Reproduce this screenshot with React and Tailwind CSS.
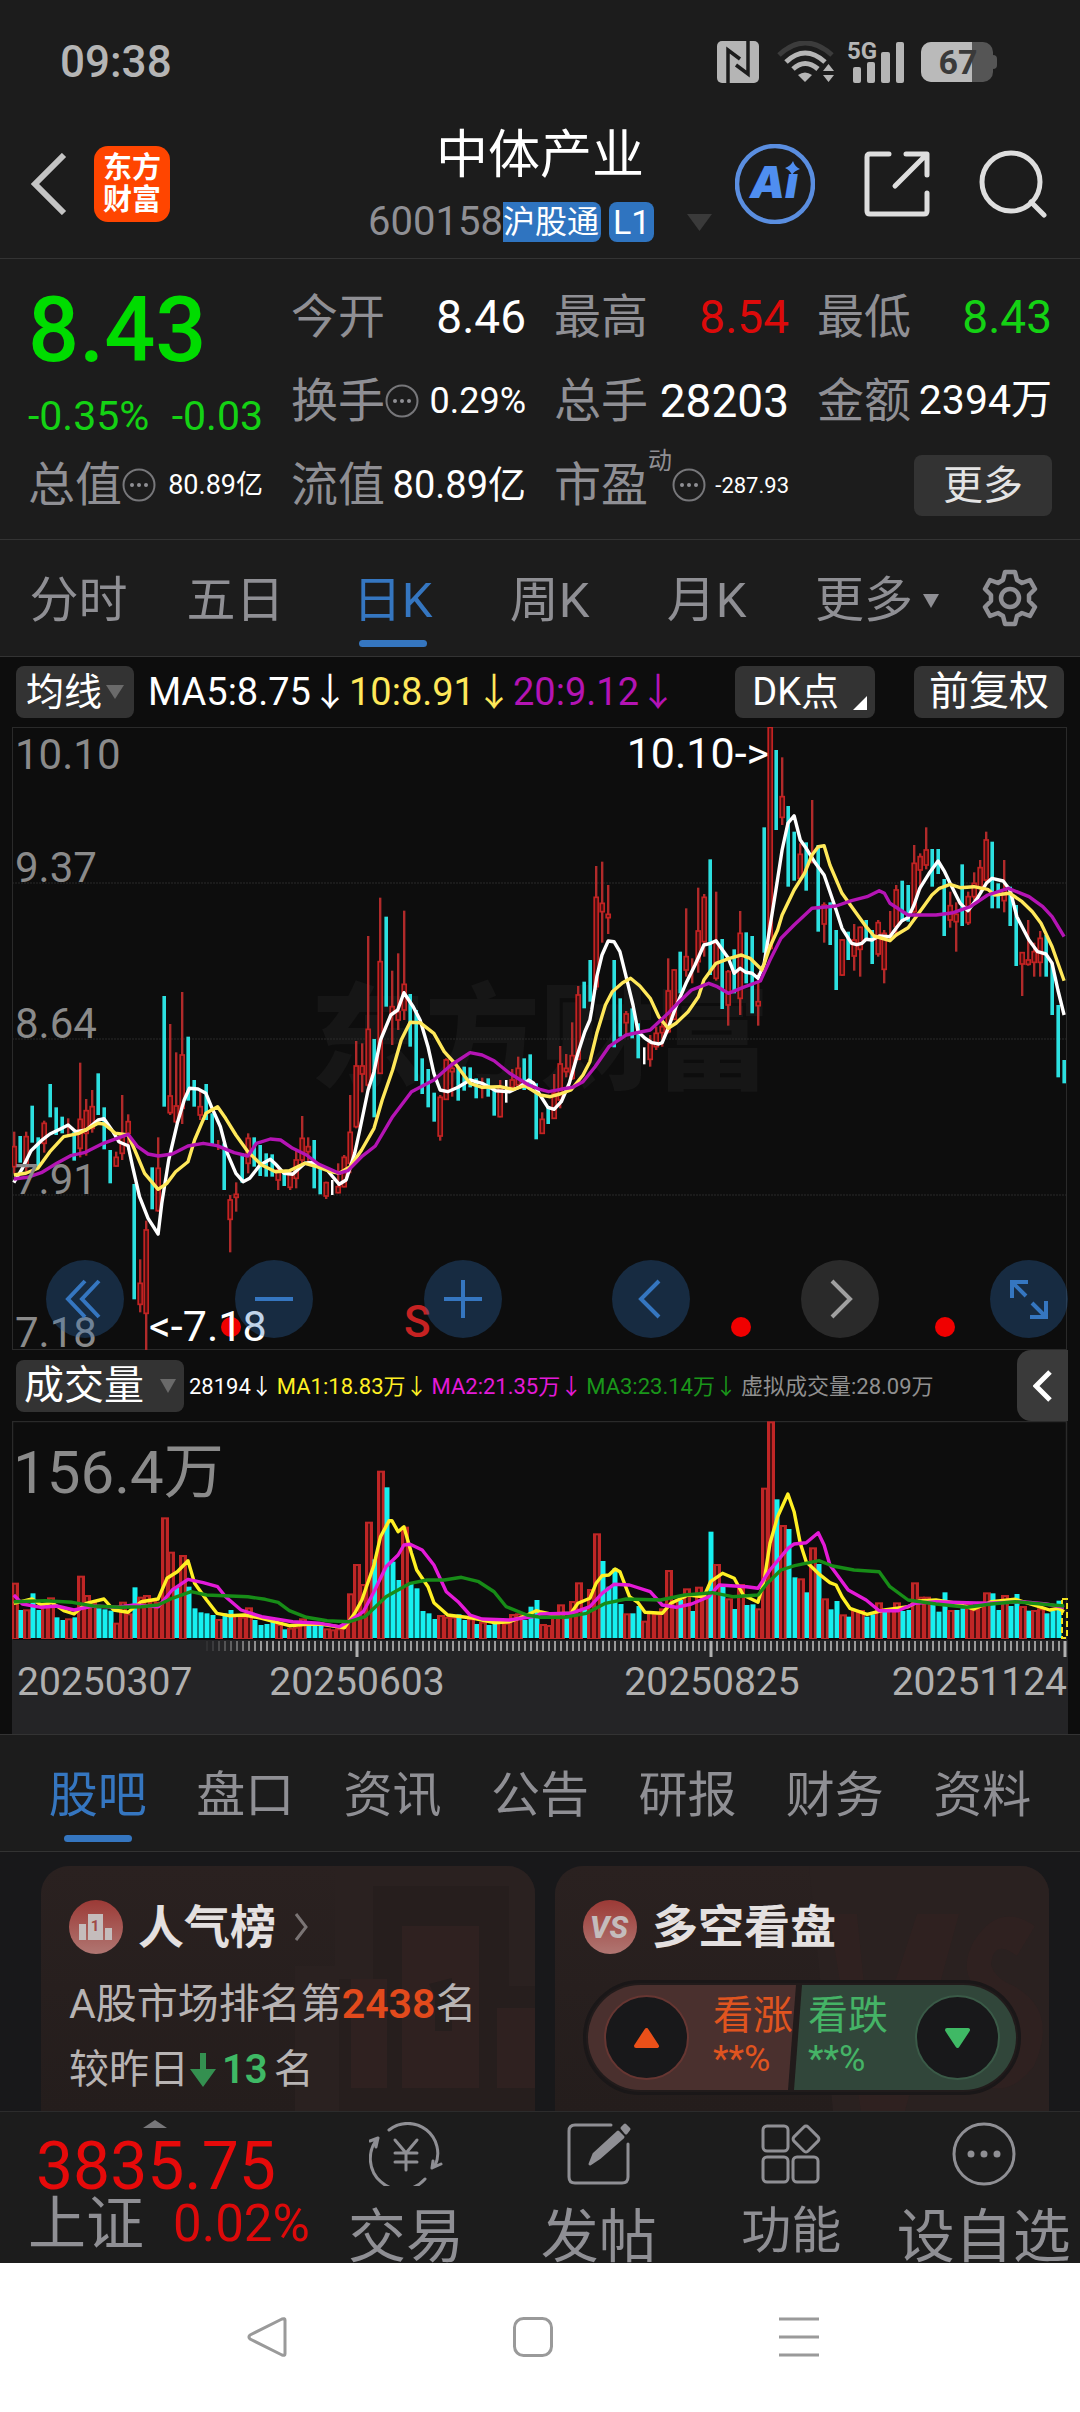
// src/App.jsx
import { useState } from 'react';

// --- K 线数据 ---
// r = 阳线, c = 阴线, w = 平盘；数值依次为 高, 低, [实体上, 实体下]（三分之一像素刻度）
const EARLY_CANDLES = `
r395,520,440,500 c408,488 r395,515,410,500 c317,428 c412,500 r362,458,370,430 c252,352 c322,405 c350,400 r355,410
c395,482 r188,472,358,445 r297,467,332,400 r270,398,320,385 c220,345 c322,448 c450,550 r455,500,472,498 r285,480,405,460 r343,450,365,400
c552,898 r778,937,850,913 r662,1052,690,940 c502,628 r412,635,505,632 c-12,320 r72,345,288,338 r157,370,318,365 r-24,372,165,325 c110,302
c240,320 r270,360,320,345 c252,360 c340,432 r420,450 c430,570 r585,757,600,658 r547,635,583,592 c460,548 r400,520,415,490
c412,500 c435,528 c460,530 c463,530 r500,570,510,540 c510,558 r510,570,520,562 r450,565,480,535 r348,500,415,480 r412,495,440,455
c420,565 c500,583 r545,597,548,588 w540,585 r490,580,560,578 r465,562,472,560 r285,520,397,490 r123,385,198,380 r130,277,198,222 r-192,260,88,255
c117,352 r-307,222,-115,220 c-250,20 r-88,135,20,40 r-140,90,35,60 r-268,60,-47,30 c-18,140 c30,243 c175,282 c207,322
c278,365 r285,422,292,408 r175,300,180,298 r180,290,205,215 c200,302 c200,272 c202,262 c235,295 r233,295 c235,290
c270,347 r240,352,262,350 w240,308 r207,270,240,262 r170,262,205,255 c175,270 c163,270 c250,418 r337,402,358,400 c318,372
r222,357,280,355 r138,325,192,300 r162,232,205,215 r67,240,167,235 r-42,180,-15,178 c-55,25 c-120,5 r-402,-30,-308,-40 r-415,-172,-290,-265 r-345,-198,-257,-247
c-120,142 c-5,110 r33,105,42,68 c25,115 c70,175 w142,193 r105,200,130,178 r80,150,100,140 r60,140,80,98 r-125,100,-27,95`;

const LATE_CANDLES = `
r958,1110,960,1108 c905,1030 r775,980,920,960 r925,1000 r713,968,843,935 r732,920,742,875 c628,975 r725,992,880,985 c867,1077 r960,1127,965,1065
c898,1030 r783,1095,850,1045 c847,1000 c858,1090 r970,1127,1055,1067 c532,908 r231,900,232,895 c300,540 r322,525,440,502 c468,710
c545,692 r580,690,613,685 c577,722 r450,640 c585,845 r757,878,765,822 c757,885 c840,1020 r868,978,870,975 c845,930
r822,962,870,918 r830,980,832,898 c810,870 c840,942 r810,920,818,912 r840,1000,850,958 r783,870 r705,860,720,830 c692,815 c705,815
r585,790,640,785 r610,720,620,660 r532,658,600,645 c597,710 c597,672 c687,858 r725,833,767,810 r757,905,793,815 c643,828 r725,825,740,818
r667,750,700,740 r630,725,653,715 r545,700,570,690 c575,775 c700,775 r630,787,720,752 c710,828 c765,948 r908,1038,908,942 r810,947,930,943
r878,980,905,937 r843,980,865,937 c855,980 c940,1095 c1065,1282 c1230,1300`;

function parseCandles(text, offset) {
  return text.trim().split(/\s+/).map((item) => ({
    kind: item[0],
    levels: item.slice(1).split(',').map((n) => Number(n) / 3 + offset),
  }));
}

const CANDLES = [...parseCandles(EARLY_CANDLES, 273), ...parseCandles(LATE_CANDLES, -77)];

// --- 成交量柱 ---
const VOLUMES = `
r548 c630 r628 c580 c630 r618 r592 c652 c660 r655 c652 r527 r585 r605 c625 c628 c632 r668 r605 r640
c562 r590 r585 r600 r605 r352 r455 c562 r465 c560 c625 c637 c640 c645 r657 c640 c630 r645 r650 r622
c660 c675 c672 c665 r672 c688 r683 r680 r655 c668 c672 c675 r685 r688 r685 r680 r580 r492 r552 r365
c478 r212 c262 c485 c540 r380 c550 c565 c633 c640 c657 r645 r650 r650 c643 c660 r655 c672 r665 c675
c670 r665 r668 r642 r640 c660 c620 c600 r672 r675 r645 r613 c655 r603 r547 c625 r567 r400 c483 c560
c505 c612 r640 c640 c618 r662 r635 r640 r625 r510 r600 c600 r565 c633 r560 r585 c395 r492 c560 r595
c627 r552 c615 c613 r625 r263 r64 c298 r375 c387 c532 r535 c577 r442 c492 r595 c628 c603 r643 c650
r630 r630 c650 c643 r607 c635 r630 r607 c633 c630 r547 r590 r590 c605 c635 c577 r630 c630 c625 r610
r628 r605 r577 c580 c630 r585 c618 c582 r618 c632 r630 r625 c640 c632 c602`.trim().split(/\s+/);

// --- 均线 ---
const PRICE_LINES = [
  {
    color: '#ffffff',
    early: '40,548 65,505 90,452 120,422 145,402 175,387 198,375 220,395 250,390 285,360 302,356 325,390 345,425 372,437 385,500 405,590 430,655 459,702 470,610 490,480 515,370 535,300 550,265 575,267 598,280 616,325 640,380 660,460 685,520 706,545 725,535 755,495 785,478 800,492 825,520 850,523 885,490 910,487 950,510 985,553 1005,540 1030,460 1045,390 1069,270 1086,215 1105,120 1135,45 1155,30 1173,-22 1200,20 1220,60 1243,140 1260,220 1278,270 1300,275 1330,262 1365,240 1400,250 1440,272 1480,275 1510,260 1535,240 1550,250',
    late: '0,1335 23,1372 41,1378 62,1355 85,1300 110,1210 130,1145 145,1110 150,1080 165,980 180,915 198,873 215,875 232,905 250,980 270,1065 285,1145 305,1165 325,1178 345,1182 355,1178 372,1135 395,1070 424,1000 450,945 476,885 495,880 511,872 530,900 547,925 564,970 581,955 598,967 616,970 633,985 651,940 668,830 685,720 703,600 720,520 738,497 756,570 773,595 800,640 825,675 842,725 860,780 877,835 905,880 920,884 935,880 947,868 964,870 985,858 1016,860 1034,835 1051,812 1069,803 1086,765 1103,715 1130,670 1156,633 1175,665 1191,700 1220,760 1243,782 1270,745 1296,700 1313,685 1345,693 1365,720 1385,800 1420,870 1445,905 1469,912 1487,940 1504,1020 1522,1095',
  },
  {
    color: '#ffe85a',
    early: '40,525 75,520 110,505 145,455 185,410 230,400 285,370 302,372 335,400 372,405 389,445 420,520 459,568 485,550 510,515 546,485 565,420 598,340 632,320 655,355 685,405 720,455 760,495 800,515 840,512 885,490 920,500 960,515 985,520 1017,500 1050,450 1086,385 1110,300 1140,210 1165,120 1191,67 1220,68 1260,100 1290,155 1325,195 1365,250 1400,262 1452,260 1490,268 1525,257',
    late: '0,1335 30,1340 58,1332 90,1320 125,1275 145,1235 165,1150 190,1065 210,1025 240,998 263,985 290,1008 320,1045 345,1100 372,1135 395,1120 430,1085 460,1040 476,990 511,940 550,925 585,915 610,925 645,960 668,890 690,840 703,795 738,720 768,670 790,615 808,590 825,587 842,645 877,730 912,780 947,830 970,858 1016,872 1034,855 1069,833 1103,785 1138,735 1160,715 1191,703 1220,713 1260,710 1300,718 1320,735 1365,730 1400,755 1430,785 1455,820 1487,890 1522,992',
  },
  {
    color: '#b414b4',
    early: '40,537 80,532 120,518 165,490 205,467 245,458 300,430 372,403 400,440 430,462 460,468 500,462 546,438 590,430 630,437 680,458 720,468 745,430 785,417 815,420 850,445 890,465 925,492 985,520 1010,512 1050,470 1090,438 1140,350 1195,275 1260,240 1310,195 1365,158 1400,165 1435,182 1480,220 1535,255',
    late: '0,1318 25,1325 60,1318 95,1312 125,1295 160,1250 200,1190 250,1155 320,1140 372,1090 395,1065 440,1020 490,1000 515,1010 547,1030 590,1012 640,993 668,930 700,865 738,825 790,775 860,768 905,752 950,740 985,722 1000,730 1016,760 1069,795 1150,795 1200,788 1250,770 1300,735 1360,715 1420,740 1460,770 1487,800 1522,860',
  },
];

const VOLUME_LINES = [
  {
    color: '#fff024',
    early: '40,610 93,597 120,615 150,608 185,632 215,642 250,610 302,597 330,630 372,637 410,605 459,597 485,535 515,515 546,482 565,550 600,600 630,640 665,647 710,645 760,655 840,677 890,673 930,672 1000,683 1030,640 1051,600 1086,495 1105,410 1130,362 1138,362 1156,395 1173,380 1195,460 1210,510 1243,560 1260,608 1300,645 1365,653 1435,668 1480,665 1520,650 1557,632',
    late: '0,635 30,642 90,640 110,610 145,595 163,550 180,527 200,525 218,507 232,515 260,590 285,608 305,637 355,640 380,610 430,585 476,590 495,545 530,520 564,535 590,585 633,607 651,540 668,430 690,350 720,282 738,335 756,430 773,485 808,520 842,548 860,555 877,590 900,625 950,643 1000,630 1069,620 1100,603 1150,600 1200,608 1260,627 1310,605 1380,598 1440,617 1480,630 1505,625 1522,635',
  },
  {
    color: '#e41ad8',
    early: '40,585 65,612 120,622 165,618 215,630 270,618 340,622 389,615 460,620 500,570 546,538 590,548 632,560 655,590 700,630 760,650 850,665 930,670 985,680 1020,660 1055,635 1086,575 1121,500 1156,465 1173,435 1191,433 1226,450 1260,495 1296,575 1330,605 1365,645 1400,657 1480,660 1560,648',
    late: '0,642 90,640 145,620 180,580 215,553 260,555 320,575 355,615 395,622 440,612 490,590 520,555 600,560 633,565 668,510 720,445 738,432 773,428 808,398 825,435 842,495 895,570 947,600 985,632 1040,632 1090,610 1150,605 1240,608 1300,610 1400,605 1470,612 1522,622',
  },
  {
    color: '#178c17',
    early: '40,605 130,602 210,607 270,618 350,622 410,620 459,615 500,595 555,575 600,585 720,590 770,598 808,607 840,632 890,652 950,662 1015,665 1060,650 1121,590 1191,550 1240,540 1290,540 1340,532 1390,545 1435,575 1470,620 1530,645 1560,650',
    late: '0,652 70,652 135,640 190,610 250,597 350,600 420,585 500,578 560,590 633,585 660,550 700,510 740,497 810,482 850,498 912,510 985,515 1016,560 1069,600 1150,612 1240,622 1310,612 1380,605 1522,618',
  },
];

function linePoints(text, dx, dy) {
  return text.split(' ').map((pair) => {
    const [x, y] = pair.split(',').map(Number);
    return `${(x / 2.904 + dx).toFixed(1)},${(y / 3 + dy).toFixed(1)}`;
  });
}

function MaLine({ line, earlyDy, lateDy }) {
  const points = [...linePoints(line.early, -12, earlyDy), ...linePoints(line.late, 528, lateDy)];
  return <polyline points={points.join(' ')} fill="none" stroke={line.color} strokeWidth="3.4" strokeLinejoin="round" />;
}

function Candle({ index, candle }) {
  const x = 2 + index * 6;
  const [high, low, top, bottom] = candle.levels;
  if (candle.kind === 'c') {
    return <rect x={x - 1.6} y={high} width="3.6" height={low - high} fill="#2ce0e0" />;
  }
  if (candle.kind === 'w') {
    return <rect x={x - 1} y={high} width="2.5" height={low - high} fill="#fff" />;
  }
  return (
    <g>
      <rect x={x - 1} y={high} width="2.4" height={low - high} fill="#b02a2a" />
      {top !== undefined && (
        <rect x={x - 1.8} y={top} width="4" height={bottom - top} fill="#4a1010" stroke="#c42222" strokeWidth="1.7" />
      )}
    </g>
  );
}

function PriceChart() {
  return (
    <svg viewBox="0 0 1056 623" className="block w-full" role="img" aria-label="日K线图">
      <text x="528" y="353" textAnchor="middle" fontSize="115" fontWeight="900" fill="#161616">东方财富</text>
      <g stroke="#2a2a2a" strokeWidth="1">
        <path d="M0 156H1055M0 312H1055M0 468H1055" strokeDasharray="2 1" />
        <rect x="0.5" y="0.5" width="1054" height="622" fill="none" />
      </g>
      {CANDLES.map((candle, i) => <Candle key={i} index={i} candle={candle} />)}
      {PRICE_LINES.map((line) => <MaLine key={line.color} line={line} earlyDy={273} lateDy={-77} />)}
      <g fill="#8a8a8a" fontSize="42">
        <text x="3" y="42">10.10</text>
        <text x="3" y="155">9.37</text>
        <text x="3" y="311">8.64</text>
        <text x="3" y="467">7.91</text>
        <text x="3" y="620">7.18</text>
      </g>
      <circle cx="219" cy="600" r="10" fill="#f00000" />
      <circle cx="729" cy="600" r="10" fill="#f00000" />
      <circle cx="933" cy="600" r="10" fill="#f00000" />
      <g fill="#fff" fontSize="43">
        <text x="757" y="41" textAnchor="end">10.10-&gt;</text>
        <text x="137" y="614">&lt;-7.18</text>
      </g>
      <text x="392" y="610" fontSize="44" fontWeight="500" fill="#c62222">S</text>
    </svg>
  );
}

function VolumeChart() {
  const ticks = Array.from({ length: 144 }, (_, i) => i);
  return (
    <svg viewBox="0 0 1056 313" className="block w-full" role="img" aria-label="成交量图">
      <rect x="0" y="219" width="1056" height="94" fill="#242426" />
      <path d="M0.5 219V0.5H1054.5V219" fill="none" stroke="#2a2a2a" strokeWidth="1.5" />
      <text x="1" y="72" fontSize="60" fill="#8a8a8a">156.4万</text>
      {VOLUMES.map((item, i) => {
        const top = Number(item.slice(1)) / 3 - 21;
        const x = 3 + i * 6;
        return item[0] === 'r' ? (
          <g key={i}>
            <rect x={x - 4} y={top} width="8" height={218 - top} fill="#c02626" />
            <rect x={x - 1} y={top + 2} width="2" height={215 - top} fill="#4a1010" />
          </g>
        ) : (
          <rect key={i} x={x - 2.5} y={top} width="5" height={217 - top} fill="#16f0f0" />
        );
      })}
      <rect x="1050" y="178" width="5" height="39" fill="none" stroke="#f0e020" strokeWidth="2" strokeDasharray="6 3" />
      {VOLUME_LINES.map((line) => <MaLine key={line.color} line={line} earlyDy={-21} lateDy={-21} />)}
      {ticks.map((i) => (
        <rect key={i} x={188 + i * 6} y="220" width="2" height="10" fill="#9a9a9a" opacity={Math.min(1, i / 10)} />
      ))}
      <path d="M345 220V236M699 220V236M1053 220V236" stroke="#b0b0b0" strokeWidth="3" />
      <g fontSize="39" fill="#b0b0b0">
        <text x="5" y="274">20250307</text>
        <text x="345" y="274" textAnchor="middle">20250603</text>
        <text x="700" y="274" textAnchor="middle">20250825</text>
        <text x="1055" y="274" textAnchor="end">20251124</text>
      </g>
    </svg>
  );
}

// --- 状态栏 ---
function StatusBar() {
  return (
    <div className="flex items-center justify-between pt-[37px] pr-[83px] pl-[60px] text-[#b5b5b5]">
      <span className="text-[44px] leading-[50px] font-medium">09:38</span>
      <div className="flex items-center">
        <svg width="42" height="42" viewBox="0 0 42 42">
          <rect width="42" height="42" rx="5" fill="#b5b5b5" />
          <path d="M11 42V9L23 18M31 0V33L19 24" fill="none" stroke="#1c1c1c" strokeWidth="3.5" />
        </svg>
        <svg width="58" height="42" viewBox="0 0 58 42" className="ml-[18px]" fill="none" strokeWidth="5">
          <path d="M2 14Q28 -10 55 14" stroke="#3c3c3c" />
          <path d="M9 21Q28 3 48 21M16 28Q28 17 41 28" stroke="#b5b5b5" />
          <path d="M21 34Q28 29 35 34L28 41Z" fill="#b5b5b5" />
          <path d="M46 30L51.500 23L57 30ZM46 34H57L51.500 41Z" fill="#b5b5b5" />
        </svg>
        <svg width="62" height="44" viewBox="0 0 62 44" className="ml-3 overflow-visible" fill="#b5b5b5">
          <text x="0" y="19" fontSize="24" fontWeight="700">5G</text>
          <rect x="6" y="27" width="8" height="16" rx="2" />
          <rect x="20" y="22" width="8" height="21" rx="2" />
          <rect x="34" y="12" width="9" height="31" rx="2" />
          <rect x="49" y="2" width="8" height="41" rx="2" />
        </svg>
        <svg width="76" height="40" viewBox="0 0 76 40" className="ml-3">
          <rect x="60" y="13" width="16" height="14" rx="4" fill="#555" />
          <rect x="0" y="0" width="72" height="40" rx="10" fill="#555" />
          <path d="M10 0H51V40H10A10 10 0 0 1 0 30V10A10 10 0 0 1 10 0Z" fill="#bababa" />
          <text x="37" y="32" textAnchor="middle" fontSize="34" fontWeight="700" fill="#3a3a3a">67</text>
        </svg>
      </div>
    </div>
  );
}

// --- 顶部标题 ---
function Header() {
  return (
    <header className="grid grid-cols-[1fr_auto_1fr] items-center border-b border-[#333] pt-[39px] pb-4">
      <div className="flex items-center gap-[26px] pl-[30px]">
        <button type="button" aria-label="返回">
          <svg width="38" height="62" viewBox="0 0 38 62" fill="none" stroke="#c4c4c4" strokeWidth="6">
            <path d="M34 2L5 31L34 60" />
          </svg>
        </button>
        <a href="#home" className="rounded-[14px] bg-[#ff4500] px-[9px] py-1.5 text-[29px] leading-8 font-bold text-white">
          东方<br />财富
        </a>
      </div>

      <div className="flex w-[344px] flex-col gap-4">
        <h1 className="text-center text-[52px] leading-[60px] text-white">中体产业</h1>
        <div className="flex items-center text-[40px] leading-10 text-[#8f8f94]">
          <span>600158</span>
          <span className="rounded-r-[8px] bg-[#2f74c0] pr-0.5 text-[32px] text-white">沪股通</span>
          <span className="ml-2 rounded-[8px] bg-[#2f74c0] px-1 text-[34px] text-white">L1</span>
          <svg width="25" height="17" viewBox="0 0 25 17" className="ml-auto"><path d="M0 0H25L12.500 17Z" fill="#3a3a3a" /></svg>
        </div>
      </div>

      <div className="flex items-center justify-end gap-[49px] pr-[33px]">
        <button type="button" aria-label="AI 助手">
          <svg width="80" height="80" viewBox="0 0 80 80">
            <circle cx="40" cy="40" r="38" fill="none" stroke="#5a8ee0" strokeWidth="4.500" />
            <text x="15" y="54" fontSize="44" fontWeight="900" fontStyle="italic" fontFamily="Inter, sans-serif" fill="#4f8ef0">Aı</text>
            <path d="M58 17Q60 23 65 25Q59 27 57 31Q55 26 50 24Q56 22 58 17Z" fill="#4f8ef0" />
          </svg>
        </button>
        <button type="button" aria-label="分享">
          <svg width="66" height="66" viewBox="0 0 66 66" fill="none" stroke="#dedede" strokeWidth="5" strokeLinecap="round" strokeLinejoin="round">
            <path d="M25 3H6Q3 3 3 6V60Q3 63 6 63H60Q63 63 63 60V42M42 3H63V24M62 4L31 35" />
          </svg>
        </button>
        <button type="button" aria-label="搜索">
          <svg width="68" height="68" viewBox="0 0 68 68" fill="none" stroke="#dedede" strokeWidth="5" strokeLinecap="round">
            <circle cx="32" cy="32" r="29" />
            <path d="M52 52L65 65" />
          </svg>
        </button>
      </div>
    </header>
  );
}

function InfoIcon() {
  return (
    <svg width="34" height="34" viewBox="0 0 34 34" className="shrink-0">
      <circle cx="17" cy="17" r="15.500" fill="none" stroke="#77777a" strokeWidth="2" />
      <g fill="#8f8f94"><circle cx="10" cy="17" r="2" /><circle cx="17" cy="17" r="2" /><circle cx="24" cy="17" r="2" /></g>
    </svg>
  );
}

function Quote({ label, value, valueClass, info, sup }) {
  return (
    <div className="flex h-[84px] items-center">
      <span className="shrink-0 text-[47px] text-[#8f8f94]">{label}</span>
      {sup && <span className="self-start text-[24px] leading-9 text-[#8f8f94]">{sup}</span>}
      {info && <InfoIcon />}
      <span className={`ml-auto whitespace-nowrap ${valueClass}`}>{value}</span>
    </div>
  );
}

function QuotePanel() {
  return (
    <section className="grid grid-cols-4 gap-x-7 border-b border-[#333] px-7 pt-4 pb-3">
      <div className="row-span-2 flex flex-col gap-3.5 pt-2.5 text-[#00dc00]">
        <strong className="text-[90px] leading-[92px] font-medium">8.43</strong>
        <div className="flex justify-between text-[41px] leading-[50px] text-[#14d214]">
          <span>-0.35%</span>
          <span>-0.03</span>
        </div>
      </div>
      <Quote label="今开" value="8.46" valueClass="text-[46px] text-white" />
      <Quote label="最高" value="8.54" valueClass="text-[46px] text-[#dc0a0a]" />
      <Quote label="最低" value="8.43" valueClass="text-[46px] text-[#14d214]" />
      <Quote label="换手" info value="0.29%" valueClass="text-[36px] text-white" />
      <Quote label="总手" value="28203" valueClass="text-[46px] text-white" />
      <Quote label="金额" value="2394万" valueClass="text-[41px] text-white" />
      <Quote label="总值" info value="80.89亿" valueClass="text-[27px] text-white" />
      <Quote label="流值" value="80.89亿" valueClass="text-[38px] text-white" />
      <Quote label="市盈" sup="动" info value="-287.93" valueClass="text-[22px] text-white" />
      <div className="flex h-[84px] items-center justify-end">
        <button type="button" className="rounded-[8px] bg-[#333] px-[29px] text-[40px] leading-[61px] text-[#e4e4e4]">更多</button>
      </div>
    </section>
  );
}

// --- 标签页按钮 ---
function TabButton({ active, onClick, children }) {
  return (
    <button type="button" role="tab" aria-selected={active} onClick={onClick} className="flex flex-col items-center gap-[15px]">
      <span className={`flex items-center text-[49px] leading-[48px] whitespace-nowrap ${active ? 'text-[#3576c0]' : 'text-[#8f8f94]'}`}>{children}</span>
      <span className={`h-[7px] w-[68px] rounded-full ${active ? 'bg-[#3576c0]' : 'bg-transparent'}`} />
    </button>
  );
}

const PERIODS = ['分时', '五日', '日K', '周K', '月K'];

function PeriodTabs() {
  const [period, setPeriod] = useState('日K');
  return (
    <nav className="grid grid-cols-[repeat(5,157fr)_184fr_111fr] items-start border-b border-[#333] pt-[37px] pb-[9px]">
      {PERIODS.map((name) => (
        <TabButton key={name} active={period === name} onClick={() => setPeriod(name)}>{name}</TabButton>
      ))}
      <TabButton active={false}>
        更多
        <svg width="16" height="14" viewBox="0 0 16 14" className="ml-2.5"><path d="M0 0H16L8 14Z" fill="#8f8f94" /></svg>
      </TabButton>
      <button type="button" aria-label="设置">
        <svg width="58" height="58" viewBox="0 0 58 58" className="ml-3 -mt-2" fill="none" stroke="#8f8f94" strokeWidth="4.500" strokeLinejoin="round">
          <path d="M24 3H34L36 11L41 14L49 11L54 20L48 26V32L54 38L49 47L41 44L36 47L34 55H24L22 47L17 44L9 47L4 38L10 32V26L4 20L9 11L17 14L22 11Z" />
          <circle cx="29" cy="29" r="9" />
        </svg>
      </button>
    </nav>
  );
}

// --- 图表工具按钮 ---
function ToolButton({ label, muted, children }) {
  return (
    <button type="button" aria-label={label} className={`flex size-[78px] items-center justify-center rounded-full ${muted ? 'bg-white/12 text-[#a0a0a0]' : 'bg-[#2f6fb8]/30 text-[#3576c0]'}`}>
      <svg width="40" height="40" viewBox="0 0 40 40" fill="none" stroke="currentColor" strokeWidth="4">{children}</svg>
    </button>
  );
}

function ChartSection() {
  return (
    <section className="bg-[#0d0d0d] px-3">
      <div className="flex items-center pt-[9px] pr-1 pb-[9px] pl-1 text-[38px] leading-[52px] whitespace-nowrap">
        <button type="button" className="flex items-center gap-1 rounded-[8px] bg-[#333] px-2.5 text-white">
          均线
          <svg width="18" height="14" viewBox="0 0 18 14"><path d="M0 0H18L9 14Z" fill="#6a6a6a" /></svg>
        </button>
        <span className="ml-3.5 text-white">MA5:8.75↓</span>
        <span className="text-[#ffe85a]">10:8.91↓</span>
        <span className="text-[#b414b4]">20:9.12↓</span>
        <button type="button" className="relative ml-auto rounded-[8px] bg-[#333] pr-9 pl-[17px] text-white">
          DK点
          <svg width="14" height="14" viewBox="0 0 14 14" className="absolute right-2 bottom-2"><path d="M14 0V14H0Z" fill="#fff" /></svg>
        </button>
        <button type="button" className="ml-[39px] rounded-[8px] bg-[#333] px-[15px] text-[40px] text-white">前复权</button>
      </div>

      <div className="relative">
        <PriceChart />
        {/* 浮在图上的操作按钮 */}
        <div className="absolute inset-x-0 bottom-3 flex justify-between pl-[34px]">
          <ToolButton label="最早"><path d="M20 2L3 20L20 38M34 2L17 20L34 38" /></ToolButton>
          <ToolButton label="缩小"><path d="M1 20H39" /></ToolButton>
          <ToolButton label="放大"><path d="M1 20H39M20 1V39" /></ToolButton>
          <ToolButton label="向前"><path d="M28 2L10 20L28 38" /></ToolButton>
          <ToolButton label="向后" muted><path d="M12 2L30 20L12 38" /></ToolButton>
          <ToolButton label="全屏"><path d="M3 19V3H19M3 3L17 17M37 22V38H21M37 38L23 24" /></ToolButton>
        </div>
      </div>

      <div className="flex items-stretch whitespace-nowrap">
        <div className="flex flex-1 items-center gap-1 pt-2.5 pb-[9px] pl-1 text-[22px]">
          <button type="button" className="mr-px flex items-center gap-4 rounded-[8px] bg-[#333] px-2 text-[40px] leading-[52px] text-white">
            成交量
            <svg width="16" height="14" viewBox="0 0 16 14"><path d="M0 0H16L8 14Z" fill="#6a6a6a" /></svg>
          </button>
          <span className="text-white">28194↓</span>
          <span className="text-[#fff024]">MA1:18.83万↓</span>
          <span className="text-[#e41ad8]">MA2:21.35万↓</span>
          <span className="text-[#1a961a]">MA3:23.14万↓</span>
          <span className="text-[#909090]">虚拟成交量:28.09万</span>
        </div>
        <button type="button" aria-label="展开" className="flex items-center rounded-l-[14px] bg-[#3a3a3a] px-4">
          <svg width="19" height="32" viewBox="0 0 19 32" fill="none" stroke="#fff" strokeWidth="5"><path d="M17 2L3 16L17 30" /></svg>
        </button>
      </div>
      <VolumeChart />
    </section>
  );
}

const SECTIONS = ['股吧', '盘口', '资讯', '公告', '研报', '财务', '资料'];

function SectionTabs() {
  const [section, setSection] = useState('股吧');
  return (
    <nav className="grid grid-cols-7 border-y border-[#333] px-6 pt-[37px] pb-[9px]">
      {SECTIONS.map((name) => (
        <TabButton key={name} active={section === name} onClick={() => setSection(name)}>{name}</TabButton>
      ))}
    </nav>
  );
}

// --- 卡片 ---
function Cards() {
  return (
    <div className="grid grid-cols-2 gap-5 bg-[#18181a] pt-3.5 pr-[31px] pl-[41px]">
      <article className="relative overflow-hidden rounded-t-[28px] bg-gradient-to-b from-[#2a2120] to-[#241d1c] px-7 pt-[34px] pb-[11px]">
        <svg width="240" height="245" viewBox="0 0 240 245" className="absolute top-0 right-0">
          <path d="M40 0H240V245H0V100H40Z" fill="#2a2120" />
          <path d="M78 20H214V120H240V245H44V113H78Z" fill="#261e1d" />
          <path d="M107 60H184V222H107ZM56 113H92V222H56ZM202 142H240V222H202Z" fill="#2f2120" />
          <path d="M134 118L157 112V165H140V130Z" fill="#261e1d" />
        </svg>
        <div className="relative flex items-center">
          <svg width="54" height="54" viewBox="0 0 54 54">
            <defs>
              <linearGradient id="badge" x1="0" y1="0" x2="0" y2="1">
                <stop offset="0" stopColor="#9c3a36" />
                <stop offset="1" stopColor="#b07672" />
              </linearGradient>
            </defs>
            <circle cx="27" cy="27" r="27" fill="url(#badge)" />
            <path d="M10 24H17V40H10ZM19 14H34V40H19ZM36 28H43V40H36Z" fill="#c4bcbc" />
            <text x="26" y="31" textAnchor="middle" fontSize="15" fontWeight="700" fill="#a04a46">1</text>
          </svg>
          <h2 className="ml-[15px] text-[46px] leading-[54px] font-bold text-[#e4e0e0]">人气榜</h2>
          <svg width="16" height="34" viewBox="0 0 16 34" className="ml-[18px]" fill="none" stroke="#7a7474" strokeWidth="3"><path d="M2 4L12 17L2 30" /></svg>
        </div>
        <p className="relative mt-5 text-[41px] leading-[60px] whitespace-nowrap text-[#b8b4b4]">
          A股市场排名第<b className="font-semibold text-[#e24a1c]">2438</b>名
        </p>
        <p className="relative mt-1.5 flex items-center text-[40px] leading-[60px] text-[#b8b4b4]">
          较昨日
          <svg width="26" height="34" viewBox="0 0 26 34" className="ml-px" fill="#349050"><path d="M10 0H16V16H26L13 34L0 16H10Z" /></svg>
          <b className="mx-1.5 font-semibold text-[#3fb965]">13</b>名
        </p>
      </article>

      <article className="relative overflow-hidden rounded-t-[28px] bg-gradient-to-b from-[#2a2120] to-[#241d1c] px-7 pt-[34px]">
        <svg width="240" height="245" viewBox="0 0 240 245" className="absolute top-0 right-0">
          <path d="M0 0H240V245H24Z" fill="#2a2120" />
          <path d="M20 48H48L62 190L108 48H150L96 245H52ZM150 200L165 165Q205 190 205 160Q200 140 180 135Q145 110 165 75Q190 35 226 60L208 90Q185 72 182 98Q185 112 205 120Q250 145 225 200Q190 245 150 200Z" fill="#2f2120" />
        </svg>
        <div className="relative flex items-center">
          <svg width="54" height="54" viewBox="0 0 54 54">
            <circle cx="27" cy="27" r="27" fill="url(#badge)" />
            <text x="26" y="38" textAnchor="middle" fontSize="31" fontWeight="800" fontStyle="italic" fill="#c4bcbc">VS</text>
          </svg>
          <h2 className="ml-[15px] text-[46px] leading-[54px] font-bold text-[#e4e0e0]">多空看盘</h2>
        </div>
        <div className="relative mt-[26px] flex w-[438px] rounded-full border-[3px] border-[#1a1718] bg-[#211b1b] p-0.5">
          <button type="button" className="flex flex-1 items-center gap-6 rounded-l-full bg-[#4a302e] py-2.5 pl-4 [clip-path:polygon(0_0,100%_0,calc(100%-8px)_100%,0_100%)]">
            <span className="flex size-[85px] shrink-0 items-center justify-center rounded-full border-2 border-[#663632] bg-[#18181a]">
              <svg width="27" height="22" viewBox="0 0 27 22"><path d="M13.500 3L24 19H3Z" fill="#ea5019" stroke="#ea5019" strokeWidth="4" strokeLinejoin="round" /></svg>
            </span>
            <span className="text-left text-[40px] leading-[42px] whitespace-nowrap text-[#e0541f]">看涨<br /><span className="text-[36px]">**%</span></span>
          </button>
          <button type="button" className="-ml-0.5 flex flex-1 items-center justify-between rounded-r-full bg-[#31463a] py-2.5 pr-4 pl-3.5 [clip-path:polygon(8px_0,100%_0,100%_100%,0_100%)]">
            <span className="text-left text-[40px] leading-[42px] whitespace-nowrap text-[#45b366]">看跌<br /><span className="text-[36px]">**%</span></span>
            <span className="flex size-[85px] shrink-0 items-center justify-center rounded-full border-2 border-[#3a5a47] bg-[#18181a]">
              <svg width="27" height="22" viewBox="0 0 27 22"><path d="M13.500 19L24 3H3Z" fill="#3fb965" stroke="#3fb965" strokeWidth="4" strokeLinejoin="round" /></svg>
            </span>
          </button>
        </div>
      </article>
    </div>
  );
}

// --- 底部操作栏 ---
function Action({ label, labelClass, children }) {
  return (
    <button type="button" className="flex flex-col items-center gap-5 pt-2.5 text-[#8f8f94]">
      <svg width="74" height="64" viewBox="0 0 74 64" fill="none" stroke="currentColor" strokeWidth="3" strokeLinecap="round" strokeLinejoin="round">{children}</svg>
      <span className={`whitespace-nowrap ${labelClass}`}>{label}</span>
    </button>
  );
}

function BottomBar() {
  return (
    <footer className="grid h-[152px] grid-cols-[310fr_repeat(4,193fr)] overflow-hidden border-t border-[#2c2c2c] bg-[#1c1c1c]">
      <div className="flex flex-col pt-2 pl-7 whitespace-nowrap">
        <svg width="24" height="8" viewBox="0 0 24 8" className="ml-[115px]"><path d="M12 0L24 8H0Z" fill="#77777a" /></svg>
        <span className="mt-2 ml-2 text-[66px] leading-[62px] text-[#e60a0a]">3835.75</span>
        <span className="flex items-center text-[58px] leading-[52px] text-[#8f8f94]">
          上证<span className="ml-[29px] text-[51px] text-[#dc0a0a]">0.02%</span>
        </span>
      </div>
      <Action label="交易" labelClass="text-[58px] leading-[62px]">
        <path d="M20 8A30 30 0 0 1 66 44M1 19L9 16M9 16A31 31 0 0 0 56 57M9 16L7 25M63 46L72 42M63 46L64 39" />
        <path d="M26 18L37 31L48 18M37 31V48M26 31H48M26 40H48" />
      </Action>
      <Action label="发帖" labelClass="text-[58px] leading-[62px]">
        <path d="M49 3H13Q7 3 7 9V55Q7 61 13 61H60Q66 61 66 55V22" />
        <path d="M28 42L32 32L56 10L61 15L37 36ZM60 6L63 3L67 7L64 11Z" fill="currentColor" />
      </Action>
      <Action label="功能" labelClass="text-[50px] leading-[50px]">
        <rect x="9" y="4" width="25" height="25" rx="4" />
        <rect x="9" y="35" width="25" height="25" rx="4" />
        <rect x="39" y="35" width="25" height="25" rx="4" />
        <rect x="42" y="7" width="20" height="20" rx="3" transform="rotate(45 52 17)" />
      </Action>
      <Action label="设自选" labelClass="text-[58px] leading-[62px]">
        <circle cx="37" cy="32" r="30" />
        <g fill="currentColor"><circle cx="24" cy="32" r="2" /><circle cx="37" cy="32" r="2" /><circle cx="50" cy="32" r="2" /></g>
      </Action>
    </footer>
  );
}

function SystemNav() {
  return (
    <div className="flex items-center justify-center gap-[226px] bg-white pt-[54px] pr-3.5 pb-[55px]">
      <button type="button" aria-label="后退">
        <svg width="40" height="40" viewBox="0 0 40 40" fill="none" stroke="#9a9a9a" strokeWidth="3" strokeLinejoin="round">
          <path d="M38 3V37Q38 39 35 38L3 22Q1 20 3 18L35 2Q38 1 38 3Z" />
        </svg>
      </button>
      <button type="button" aria-label="主页">
        <svg width="40" height="40" viewBox="0 0 40 40" fill="none" stroke="#9a9a9a" strokeWidth="3">
          <rect x="1.500" y="1.500" width="37" height="37" rx="9" />
        </svg>
      </button>
      <button type="button" aria-label="最近任务">
        <svg width="40" height="40" viewBox="0 0 40 40" fill="none" stroke="#9a9a9a" strokeWidth="3">
          <path d="M0 2H40M0 20H40M0 38H40" />
        </svg>
      </button>
    </div>
  );
}

function App() {
  return (
    <div className="bg-[#1c1c1c] font-['Roboto','Noto_Sans_CJK_SC',sans-serif]">
      <StatusBar />
      <Header />
      <QuotePanel />
      <PeriodTabs />
      <ChartSection />
      <SectionTabs />
      <Cards />
      <BottomBar />
      <SystemNav />
    </div>
  );
}

export default App;
